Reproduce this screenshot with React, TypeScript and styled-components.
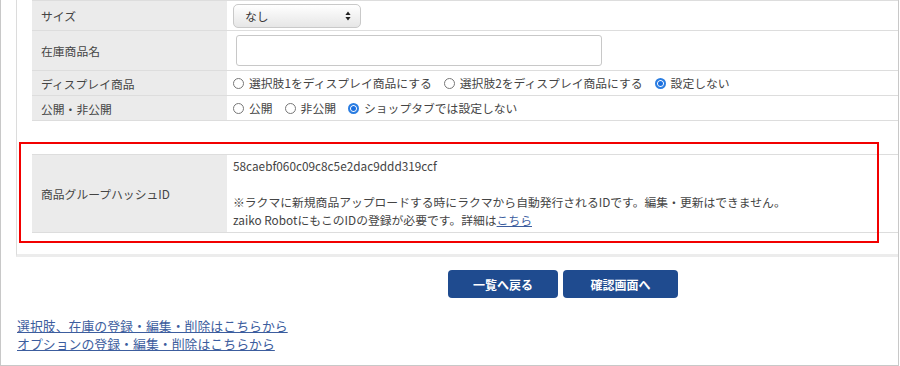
import * as React from 'react';
import styled, { createGlobalStyle } from 'styled-components';

const GlobalStyle = createGlobalStyle`
  html, body {
    margin: 0;
    padding: 0;
    background: #fff;
  }
  body {
    font-family: "Noto Sans CJK JP", "Noto Sans", sans-serif;
    font-size: 11.8px;
    color: #444;
  }
`;

const Frame = styled.div`
  box-sizing: border-box;
  width: 899px;
  height: 366px;
  border: 1px solid #c8c8c8;
  border-top: none;
  overflow: hidden;
`;

const Panel = styled.div`
  margin-left: 15px;
  padding: 0 0 21px 15px;
  border-left: 1px solid #dcdcdc;
  border-bottom: 3px solid #ececec;
`;

const FormTable = styled.table<{ $gap?: number }>`
  width: 100%;
  table-layout: fixed;
  border-collapse: collapse;
  margin-top: ${(p) => p.$gap ?? 0}px;
  border-top: 1px solid #dddddd;

  tr {
    border-bottom: 1px solid #dddddd;
  }
`;

const Label = styled.th<{ $h: number }>`
  width: 195px;
  height: ${(p) => p.$h}px;
  box-sizing: border-box;
  padding: 0 0 0 9px;
  background: #ebebeb;
  font-weight: normal;
  text-align: left;
  vertical-align: middle;
  white-space: nowrap;
`;

const Value = styled.td<{ $pad?: string }>`
  padding: ${(p) => p.$pad ?? '0 0 0 6px'};
  vertical-align: middle;
  line-height: 18px;
  white-space: nowrap;
`;

const SelectBox = styled.div`
  box-sizing: border-box;
  display: flex;
  align-items: center;
  justify-content: space-between;
  width: 128px;
  height: 24px;
  padding: 0 9px 0 11px;
  border: 1px solid #c9c9c9;
  border-radius: 5px;
  background: linear-gradient(#ffffff, #e6e6e6);
  color: #333;
`;

const TextInput = styled.input`
  box-sizing: border-box;
  width: 366px;
  height: 31px;
  margin-left: 3px;
  border: 1px solid #c8c8c8;
  border-radius: 3px;
  background: #fff;
  outline: none;
`;

const RadioGroup = styled.div`
  display: flex;
  align-items: center;
  gap: 12px;
`;

const RadioOption = styled.label`
  display: flex;
  align-items: center;
  gap: 5px;
`;

const RadioMark = styled.span<{ $checked?: boolean }>`
  box-sizing: border-box;
  width: 11px;
  height: 11px;
  border-radius: 50%;
  border: ${(p) => (p.$checked ? '2px solid #2a7de1' : '1px solid #777')};
  background: ${(p) => (p.$checked ? '#1a6fe0' : '#fff')};
  box-shadow: ${(p) => (p.$checked ? 'inset 0 0 0 1px #fff' : 'none')};
`;

const Highlight = styled.div`
  position: relative;
`;

const RedFrame = styled.div`
  position: absolute;
  left: -13px;
  top: -12px;
  width: 860px;
  height: 101px;
  box-sizing: border-box;
  border: 2px solid #f20000;
  pointer-events: none;
`;

const Actions = styled.div`
  display: flex;
  gap: 5px;
  margin-top: 13px;
  padding-left: 447px;
`;

const ActionButton = styled.button<{ $w: number }>`
  width: ${(p) => p.$w}px;
  height: 28px;
  border: none;
  border-radius: 4px;
  background: #1f4b8f;
  color: #fff;
  font-family: inherit;
  font-size: 12px;
  font-weight: bold;
`;

const LinkList = styled.div`
  display: flex;
  flex-direction: column;
  align-items: flex-start;
  margin-top: 19px;
  padding-left: 16px;
`;

const TextLink = styled.a<{ $size?: number }>`
  color: #3c5d9e;
  font-size: ${(p) => p.$size ?? 12.9}px;
  line-height: 18px;
  text-decoration: underline;
`;

function UpDown() {
  return (
    <svg width="6" height="10" viewBox="0 0 6 10">
      <path d="M3 0.5 L5.6 4 H0.4 Z M3 9.5 L5.6 6 H0.4 Z" fill="#222" />
    </svg>
  );
}

function Radio({ label, checked }: { label: string; checked?: boolean }) {
  return (
    <RadioOption>
      <RadioMark $checked={checked} />
      {label}
    </RadioOption>
  );
}

export default function App() {
  return (
    <>
      <GlobalStyle />
      <Frame>
        <Panel>
          <FormTable>
            <tbody>
              <tr>
                <Label $h={30}>サイズ</Label>
                <Value>
                  <SelectBox>
                    なし
                    <UpDown />
                  </SelectBox>
                </Value>
              </tr>
              <tr>
                <Label $h={40}>在庫商品名</Label>
                <Value>
                  <TextInput type="text" />
                </Value>
              </tr>
              <tr>
                <Label $h={25}>ディスプレイ商品</Label>
                <Value>
                  <RadioGroup>
                    <Radio label="選択肢1をディスプレイ商品にする" />
                    <Radio label="選択肢2をディスプレイ商品にする" />
                    <Radio label="設定しない" checked />
                  </RadioGroup>
                </Value>
              </tr>
              <tr>
                <Label $h={25}>公開・非公開</Label>
                <Value>
                  <RadioGroup>
                    <Radio label="公開" />
                    <Radio label="非公開" />
                    <Radio label="ショップタブでは設定しない" checked />
                  </RadioGroup>
                </Value>
              </tr>
            </tbody>
          </FormTable>

          <Highlight>
            <FormTable $gap={33}>
              <tbody>
                <tr>
                  <Label $h={77}>商品グループハッシュID</Label>
                  <Value $pad="2px 0 3px 6px">
                    58caebf060c09c8c5e2dac9ddd319ccf
                    <br />
                    <br />
                    ※ラクマに新規商品アップロードする時にラクマから自動発行されるIDです。編集・更新はできません。
                    <br />
                    zaiko RobotにもこのIDの登録が必要です。詳細は<TextLink href="#" $size={11.8}>こちら</TextLink>
                  </Value>
                </tr>
              </tbody>
            </FormTable>
            <RedFrame />
          </Highlight>
        </Panel>

        <Actions>
          <ActionButton $w={110}>一覧へ戻る</ActionButton>
          <ActionButton $w={115}>確認画面へ</ActionButton>
        </Actions>

        <LinkList>
          <TextLink href="#">選択肢、在庫の登録・編集・削除はこちらから</TextLink>
          <TextLink href="#">オプションの登録・編集・削除はこちらから</TextLink>
        </LinkList>
      </Frame>
    </>
  );
}
